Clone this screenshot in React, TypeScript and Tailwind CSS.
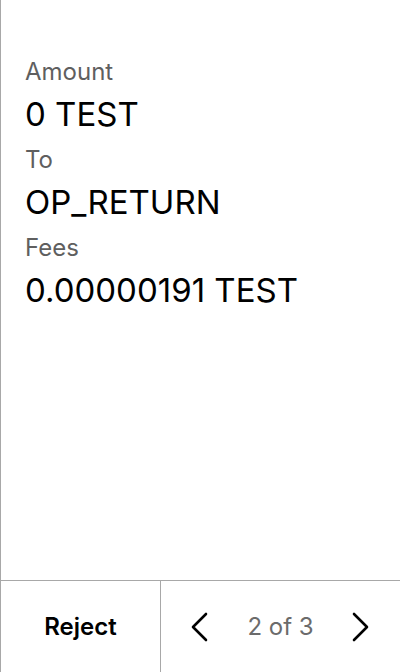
const rows = [
  { label: "Amount", value: "0 TEST" },
  { label: "To", value: "OP_RETURN" },
  { label: "Fees", value: "0.00000191 TEST" },
];

const Chevron = ({ dir }: { dir: "left" | "right" }) => (
  <svg width="20" height="32" viewBox="0 0 20 32" fill="none" stroke="#000" strokeWidth="2.6" strokeLinecap="round" strokeLinejoin="round">
    <polyline points={dir === "left" ? "16,3 3,16 16,29" : "3,3 16,16 3,29"} />
  </svg>
);

const App = () => {
  return (
    <div className="h-[672px] w-[400px] flex flex-col bg-white border-l border-[#a8a8a8] text-black" style={{ fontFamily: "Inter, 'Noto Sans', sans-serif" }}>
      <div className="flex-1 pt-[57px] px-6">
        {rows.map((row) => (
          <div key={row.label}>
            <div className="text-[24px] leading-[30px] text-[#5f5f5f]">{row.label}</div>
            <div className="text-[33px] leading-[62px] -mt-[4px]">{row.value}</div>
          </div>
        ))}
      </div>
      <div className="h-[92px] flex border-t border-[#a8a8a8]">
        <button className="w-[160px] border-r border-[#a8a8a8] text-[24px] font-semibold">Reject</button>
        <div className="flex-1 flex items-center justify-between px-[29px]">
          <Chevron dir="left" />
          <span className="text-[24px] text-[#6b6b6b]">2 of 3</span>
          <Chevron dir="right" />
        </div>
      </div>
    </div>
  );
};

export default App;
